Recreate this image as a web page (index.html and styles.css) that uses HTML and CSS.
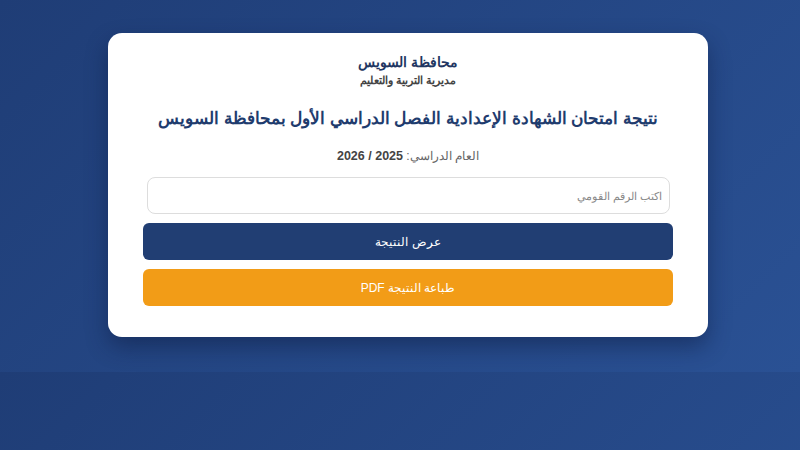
FILE: index.html
```html
<!DOCTYPE html>
<html lang="ar" dir="rtl">
<head>
<meta charset="utf-8">
<title>نتيجة الشهادة الإعدادية</title>
<link rel="stylesheet" href="styles.css">
</head>
<body>
<main class="card">
  <header class="head">
    <div class="gov">محافظة السويس</div>
    <div class="dept">مديرية التربية والتعليم</div>
  </header>
  <h1 class="title">نتيجة امتحان الشهادة الإعدادية الفصل الدراسي الأول بمحافظة السويس</h1>
  <p class="year">العام الدراسي: <b>2025 / 2026</b></p>
  <form class="form">
    <input class="field" type="text" placeholder="اكتب الرقم القومي">
    <button class="btn btn-show" type="button">عرض النتيجة</button>
    <button class="btn btn-pdf" type="button">طباعة النتيجة PDF</button>
  </form>
</main>
</body>
</html>
```

FILE: styles.css
```css
html, body { margin: 0; }
body {
  padding: 33px 0 35px 16px;
  font-family: "Liberation Sans", "Noto Sans", Arial, sans-serif;
  background: linear-gradient(135deg, #1f3d76, #2a5194);
}
.card {
  width: 600px;
  margin: 0 auto;
  box-sizing: border-box;
  background: #fff;
  border-radius: 14px;
  padding: 21px 35px 31px;
  text-align: center;
  box-shadow: 0 10px 22px rgba(10, 25, 60, 0.45);
}
.gov { font-size: 13.5px; line-height: 18px; font-weight: bold; color: #1f3662; }
.dept { font-size: 11px; line-height: 16px; font-weight: bold; color: #444; }
.title {
  font-size: 16.8px;
  line-height: 24px;
  color: #1f3c6e;
  margin: 19px 0 0;
  white-space: nowrap;
}
.year { font-size: 12px; line-height: 18px; color: #666; margin: 16px 0 12px; }
.year b { color: #444; font-size: 12.5px; }
.form { display: flex; flex-direction: column; gap: 9px; }
.field {
  height: 37px;
  margin: 0 3px 0 4px;
  box-sizing: border-box;
  border: 1px solid #ddd;
  border-radius: 8px;
  padding: 0 7px;
  font: inherit;
  font-size: 11px;
  direction: rtl;
}
.field::placeholder { color: #888; }
.btn {
  height: 37px;
  border: none;
  border-radius: 6px;
  color: #fff;
  font: inherit;
  font-size: 12px;
}
.btn-show { background: #213e73; }
.btn-pdf { background: #f29c17; }
```
